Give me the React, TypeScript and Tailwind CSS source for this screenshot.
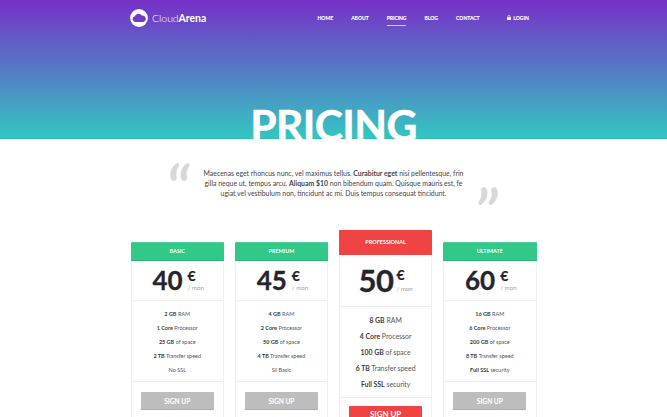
import React from "react";

type Plan = {
  name: string;
  price: string;
  features: [string, string][];
  featured?: boolean;
};

const plans: Plan[] = [
  { name: "BASIC", price: "40", features: [["2 GB", " RAM"], ["1 Core", " Processor"], ["25 GB", " of space"], ["2 TB", " Transfer speed"], ["", "No SSL"]] },
  { name: "PREMIUM", price: "45", features: [["4 GB", " RAM"], ["2 Core", " Processor"], ["50 GB", " of space"], ["4 TB", " Transfer speed"], ["", "Sll Basic"]] },
  { name: "PROFESSIONAL", price: "50", featured: true, features: [["8 GB", " RAM"], ["4 Core", " Processor"], ["100 GB", " of space"], ["6 TB", " Transfer speed"], ["Full SSL", " security"]] },
  { name: "ULTIMATE", price: "60", features: [["16 GB", " RAM"], ["6 Core", " Processor"], ["200 GB", " of space"], ["8 TB", " Transfer speed"], ["Full SSL", " security"]] },
];

const navItems = ["HOME", "ABOUT", "PRICING", "BLOG", "CONTACT"];

function Logo() {
  return (
    <div className="flex items-center gap-[4px] text-white">
      <svg className="h-[18px] w-[18px]" viewBox="0 0 18 18">
        <circle cx="9" cy="9" r="8.9" fill="#fff" />
        <path d="M5.300 12.900a2.700 2.700 0 0 1-.7-5.300A4 4 0 0 1 11.800 6.600a3.200 3.200 0 0 1 1.400 6.300z" fill="#6f3bc8" />
      </svg>
      <span className="text-[10.500px] leading-[18px] font-light tracking-[-0.05px]">
        Cloud<b className="font-bold">Arena</b>
      </span>
    </div>
  );
}

function QuoteMark({ flipped = false }: { flipped?: boolean }) {
  return (
    <svg className={flipped ? "h-[18px] w-[20px] rotate-180" : "h-[18px] w-[20px]"} viewBox="0 0 20 18" fill="#d8d8d8" stroke="#d8d8d8" strokeWidth=".7" strokeLinejoin="round">
      <path d="M6.300.8C2 4 .4 8.500.6 13C.8 16 2 17.500 3.500 17.500C5 17.500 6.300 16.800 6.600 15.200C5.200 11 5.900 7 9 2.600C9.300.8 7.600 0 6.300.8Z" />
      <path transform="translate(10.300 0)" d="M6.300.8C2 4 .4 8.500.6 13C.8 16 2 17.500 3.500 17.500C5 17.500 6.300 16.800 6.600 15.200C5.200 11 5.900 7 9 2.600C9.300.8 7.600 0 6.300.8Z" />
    </svg>
  );
}

function PlanCard({ plan }: { plan: Plan }) {
  const f = plan.featured;
  return (
    <article className={`w-[93.500px] shrink-0 text-center text-[#55555c] ${f ? "" : "mt-[12px]"}`}>
      <h2 className={`flex items-center justify-center rounded-t-[1px] font-bold text-white ${f ? "h-[25px] bg-[#f04343] text-[5.500px]" : "h-[19px] border-y border-t-[#54cd99] border-b-[#25b877] bg-[#31c987] text-[5.400px]"}`}>
        {plan.name}
      </h2>
      <div className={`border-x border-[#f1f1f1] ${f ? "h-[200px]" : "h-[180px]"}`}>
        <div className={`flex justify-center border-b border-[#eeeeee] text-[#25252d] ${f ? "h-[52px] pt-[7px]" : "h-[40px] pt-[2px] pl-[2px]"}`}>
          <span className={`font-bold [-webkit-text-stroke:0.3px] ${f ? "text-[31px] leading-[36px] tracking-[-0.5px]" : "text-[26px] leading-[34px]"}`}>{plan.price}</span>
          <span className={`flex flex-col items-start text-left ${f ? "ml-[3px] pt-[5px]" : "ml-[5px] pt-[5px]"}`}>
            <span className="text-[14px] leading-[16px] font-bold [-webkit-text-stroke:0.2px]">€</span>
            <span className={`text-[6.200px] leading-[8px] font-normal text-[#a0a0a4] ${f ? "mt-[2px]" : ""}`}>/ mon</span>
          </span>
        </div>
        <ul className={`border-b border-[#eeeeee] ${f ? "h-[91px] pt-[5px] text-[6.900px] leading-[16px]" : "h-[81px] pt-[6px] text-[5.500px] leading-[14px]"}`}>
          {plan.features.map(([strong, rest]) => (
            <li key={strong + rest}>
              <b className="font-bold text-[#3c3c44]">{strong}</b>
              {rest}
            </li>
          ))}
        </ul>
        <button
          className={`mx-auto flex h-[18px] w-[73px] items-center justify-center rounded-[1px] border-b leading-[10px] font-bold text-white ${f ? "mt-[8px] border-[#db3131] bg-[#f04343] pb-[1px] text-[7.900px]" : "mt-[10px] border-[#aaaaaa] bg-[#bdbdbd] pt-[1px] text-[6.600px]"}`}
        >
          SIGN UP
        </button>
      </div>
    </article>
  );
}

export default function App() {
  return (
    <div className="h-[417px] w-[667px] overflow-hidden bg-white font-['Lato',sans-serif]">
      <header className="h-[139px] border-b border-[#30bdba] bg-[linear-gradient(to_bottom,#7630c8,#33c6c1)]">
        <div className="flex h-[36px] items-center pl-[130px]">
          <div className="w-[187.500px]">
            <Logo />
          </div>
          <nav className="flex text-[5.050px] leading-[8px] font-bold text-white [-webkit-text-stroke:0.1px]">
            {navItems.map((item) => (
              <a key={item} className={item === "PRICING" ? "mr-[18.100px] h-[16px] border-b border-white/70 pt-[4px] tracking-[-0.08px]" : "mr-[18.100px] h-[16px] pt-[4px] tracking-[-0.030px]"}>
                {item}
              </a>
            ))}
            <a className="ml-[9px] flex h-[16px] gap-[2.500px] pt-[4px]">
              <svg className="mt-[1px] h-[5px] w-[4px]" viewBox="0 0 4 5">
                <path d="M.9 2.500V1.500a1.100 1.100 0 0 1 2.200 0v1" fill="none" stroke="#fff" strokeWidth=".7" />
                <rect y="2.200" width="4" height="2.800" rx=".4" fill="#fff" />
              </svg>
              LOGIN
            </a>
          </nav>
        </div>
        <h1 className="pt-[63px] text-center text-[42.600px] leading-[52px] font-bold tracking-[-0.6px] whitespace-nowrap text-white [-webkit-text-stroke:0.5px]">PRICING</h1>
      </header>
      <section className="flex h-[91px] justify-center pt-[24px]">
        <QuoteMark />
        <p className="mx-[13.500px] w-[261px] pt-[4.500px] text-center text-[6.900px] leading-[10.400px] whitespace-nowrap text-[#44444a]">
          Maecenas eget rhoncus nunc, vel maximus tellus. <b>Curabitur eget</b> nisi pellentesque, frin
          <br />
          gilla neque ut, tempus arcu. <b>Aliquam $10</b> non bibendum quam. Quisque mauris est, fe
          <br />
          ugiat vel vestibulum non, tincidunt ac mi. Duis tempus consequat tincidunt.
        </p>
        <div className="pt-[24px]">
          <QuoteMark flipped />
        </div>
      </section>
      <main className="flex items-start gap-[10.700px] pl-[130.500px]">
        {plans.map((plan) => (
          <PlanCard key={plan.name} plan={plan} />
        ))}
      </main>
    </div>
  );
}
